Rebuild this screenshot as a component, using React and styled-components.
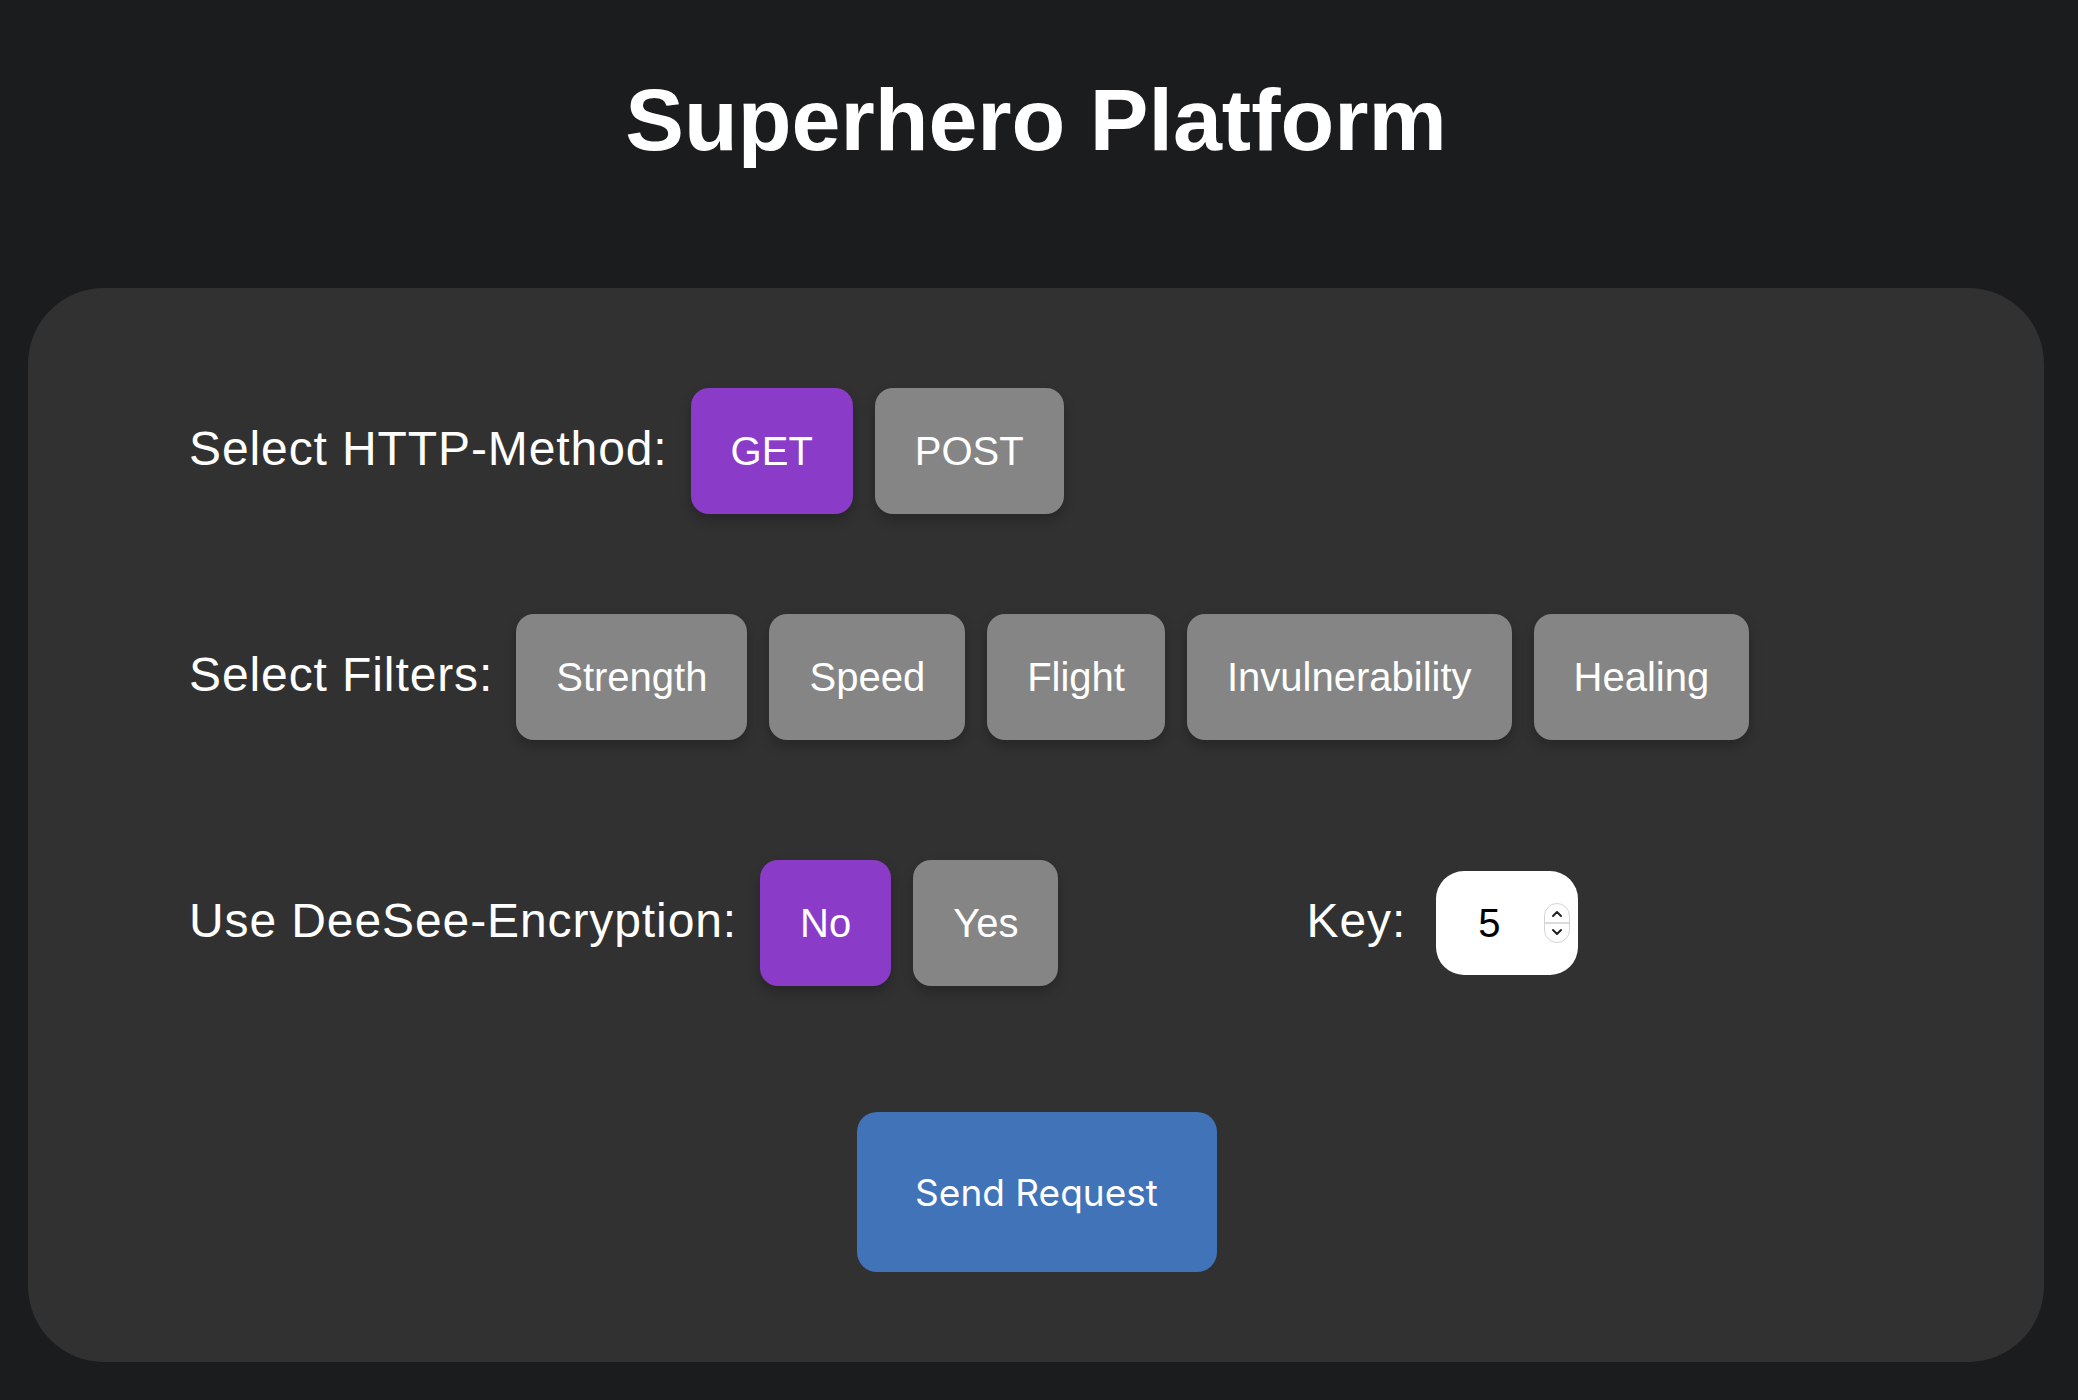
import React, { useState } from "react";
import styled, { createGlobalStyle } from "styled-components";

const FILTERS = ["Strength", "Speed", "Flight", "Invulnerability", "Healing"];

function Spinner() {
  return (
    <SpinnerIcon width="26" height="40" viewBox="0 0 26 40">
      <rect x="0.5" y="0.5" width="25" height="39" rx="12.5" fill="#fff" stroke="#d4d4d4" />
      <path d="M1 20 H25" stroke="#cfcfcf" strokeWidth="1.5" />
      <path d="M9 13 L13 9 L17 13" fill="none" stroke="#222" strokeWidth="2" strokeLinecap="round" strokeLinejoin="round" />
      <path d="M9 27 L13 31 L17 27" fill="none" stroke="#222" strokeWidth="2" strokeLinecap="round" strokeLinejoin="round" />
    </SpinnerIcon>
  );
}

export default function App() {
  const [method, setMethod] = useState("GET");
  const [filters, setFilters] = useState([]);
  const [encrypt, setEncrypt] = useState(false);
  const [key, setKey] = useState(5);

  const toggleFilter = (f) =>
    setFilters((prev) => (prev.includes(f) ? prev.filter((x) => x !== f) : [...prev, f]));

  return (
    <>
      <GlobalStyle />
      <Page>
        <Title>Superhero Platform</Title>
        <Panel>
          <Row>
            <Label>Select HTTP-Method:</Label>
            {["GET", "POST"].map((m) => (
              <Toggle key={m} active={method === m} onClick={() => setMethod(m)}>
                {m}
              </Toggle>
            ))}
          </Row>

          <Row spaced="100px">
            <Label>Select Filters:</Label>
            {FILTERS.map((f) => (
              <Toggle key={f} active={filters.includes(f)} onClick={() => toggleFilter(f)}>
                {f}
              </Toggle>
            ))}
          </Row>

          <Row spaced="120px">
            <Label>Use DeeSee-Encryption:</Label>
            <Toggle active={!encrypt} onClick={() => setEncrypt(false)}>
              No
            </Toggle>
            <Toggle active={encrypt} onClick={() => setEncrypt(true)}>
              Yes
            </Toggle>
            <KeyLabel htmlFor="key">Key:</KeyLabel>
            <KeyField>
              <KeyInput
                id="key"
                type="number"
                value={key}
                onChange={(e) => setKey(e.target.value)}
              />
              <Spinner />
            </KeyField>
          </Row>

          <SendButton>Send Request</SendButton>
        </Panel>
      </Page>
    </>
  );
}

const GlobalStyle = createGlobalStyle`
  html, body {
    margin: 0;
    padding: 0;
    background-color: #1b1c1e;
  }
  body {
    font-family: "Liberation Sans", Arial, sans-serif;
    color: #ffffff;
  }
`;

const Page = styled.div`
  min-height: 1400px;
  box-sizing: border-box;
  padding: 70px 34px 38px 28px;
  background-color: #1b1c1e;
`;

const Title = styled.h1`
  margin: 0 0 118px 0;
  text-align: center;
  font-size: 88px;
  line-height: 100px;
  font-weight: 700;
  color: #ffffff;
`;

const Panel = styled.div`
  background-color: #313131;
  border-radius: 76px;
  padding: 100px 160px 90px 161px;
  display: flex;
  flex-direction: column;
`;

const Row = styled.div`
  display: flex;
  align-items: baseline;
  gap: 22px;
  margin-top: ${(p) => p.spaced || "0"};
`;

const Label = styled.span`
  font-size: 48px;
  letter-spacing: 0.9px;
  color: #ffffff;
  margin-right: 1px;
`;

const Toggle = styled.button`
  font-family: "Liberation Sans", Arial, sans-serif;
  font-size: 40px;
  line-height: 46px;
  color: #ffffff;
  background-color: ${(p) => (p.active ? "#8a3bc8" : "#858585")};
  border: none;
  border-radius: 18px;
  padding: 40px 40px;
  cursor: pointer;
  box-shadow: 0 6px 12px rgba(0, 0, 0, 0.22);
`;

const KeyLabel = styled.label`
  font-size: 48px;
  letter-spacing: 0.9px;
  color: #ffffff;
  margin-left: 226px;
  margin-right: 8px;
`;

const KeyField = styled.div`
  display: flex;
  align-items: center;
  box-sizing: border-box;
  width: 142px;
  height: 104px;
  padding: 0 8px 0 42px;
  background-color: #ffffff;
  border-radius: 28px;
`;

const KeyInput = styled.input`
  flex: 1;
  min-width: 0;
  border: none;
  outline: none;
  padding: 0;
  background: transparent;
  font-family: "Liberation Sans", Arial, sans-serif;
  font-size: 40px;
  line-height: 46px;
  color: #000000;
  -moz-appearance: textfield;

  &::-webkit-outer-spin-button,
  &::-webkit-inner-spin-button {
    -webkit-appearance: none;
    margin: 0;
  }
`;

const SpinnerIcon = styled.svg`
  flex-shrink: 0;
  display: block;
`;

const SendButton = styled.button`
  align-self: center;
  margin-top: 126px;
  width: 360px;
  height: 160px;
  font-family: Inter, "Noto Sans", sans-serif;
  font-size: 37px;
  color: #ffffff;
  background-color: #4173b9;
  border: none;
  border-radius: 20px;
  cursor: pointer;
`;
